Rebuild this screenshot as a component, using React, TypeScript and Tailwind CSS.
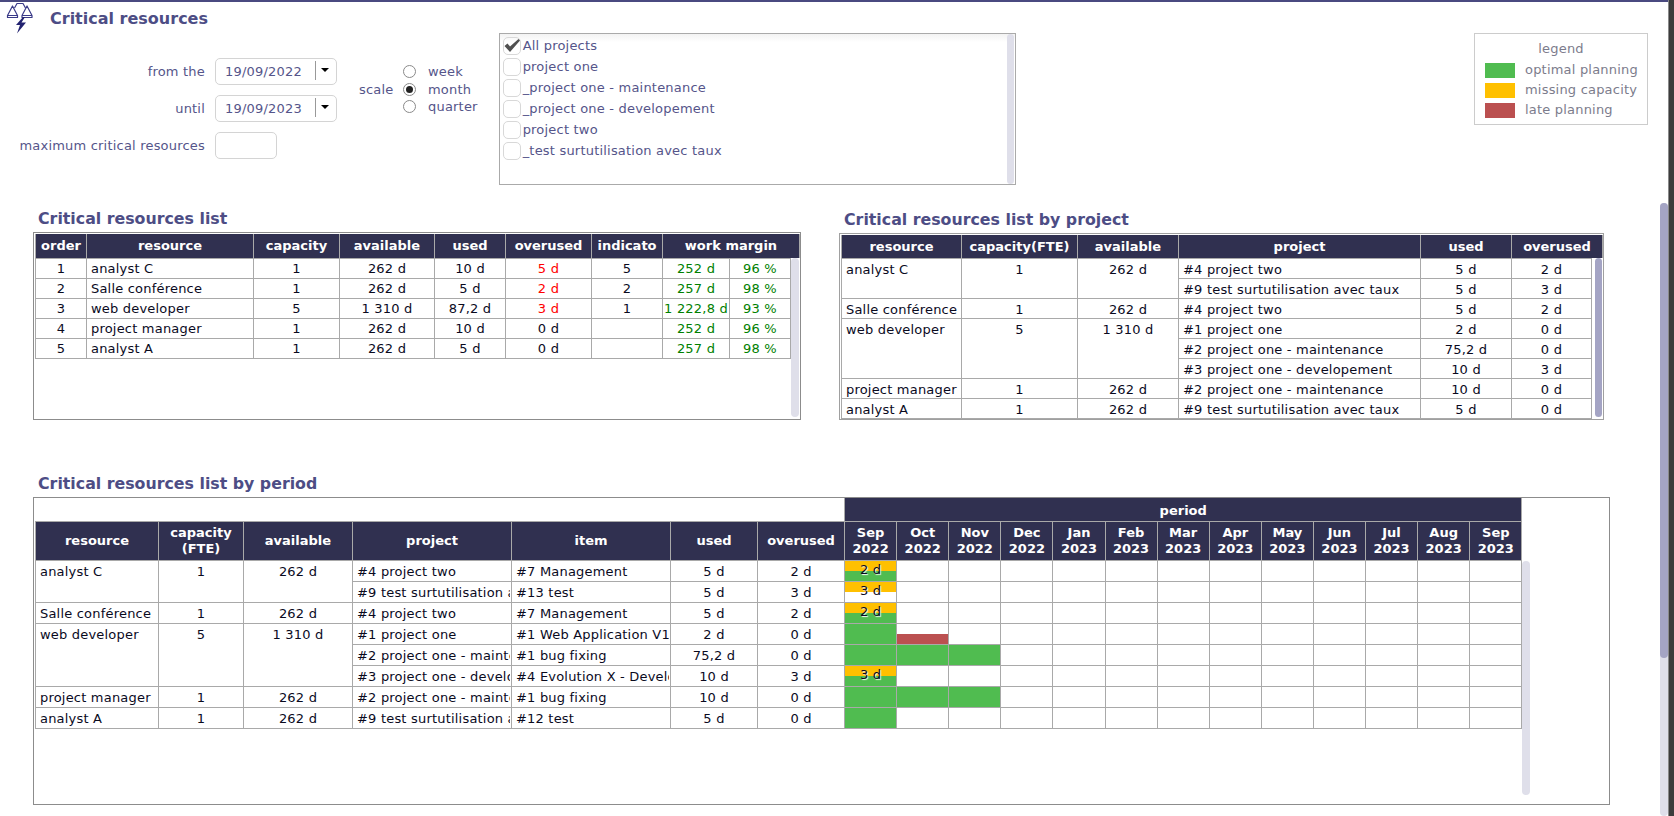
import type { ReactNode } from "react";

const font = "font-['DejaVu_Sans','Liberation_Sans',sans-serif]";

function ScaleIcon() {
  return (
    <svg width="28" height="32" viewBox="0 0 28 32" fill="none" aria-hidden>
      <path d="M8.5 6 L11 1.5 H17 L19.5 6" stroke="#3a3a88" strokeWidth="1.2" />
      <path d="M6.5 4 L1.5 13.5 V15.5 H11.5 V13.5 Z M1.5 13.5 H11.5" stroke="#3a3a88" strokeWidth="1.2" strokeLinejoin="round" />
      <path d="M21 4 L16 13.5 V15.5 H26 V13.5 Z M16 13.5 H26" stroke="#3a3a88" strokeWidth="1.2" strokeLinejoin="round" />
      <path d="M17 15 L10 23 H14 L11 31.5 L20 20.5 H15.5 L19 15 Z" fill="#232370" />
    </svg>
  );
}

function Field({ label, value, wide = true }: { label: string; value?: string; wide?: boolean }) {
  return (
    <div className="flex items-center h-[27px]">
      <span className="w-[205px] text-right text-[13px] text-[#55558a] whitespace-nowrap">{label}</span>
      <div
        className={`ml-[10px] h-[27px] flex items-center rounded-[5px] border border-[#d4d4d4] text-[13px] text-[#55558a] ${
          wide ? "w-[122px]" : "w-[62px]"
        }`}
      >
        {value && (
          <>
            <span className="pl-[9px] w-[99px]">{value}</span>
            <span className="h-[19px] mb-[2px] border-l border-[#999]" />
            <span className="ml-[5px] mb-[3px] w-0 h-0 border-x-[4px] border-x-transparent border-t-[4px] border-t-black" />
          </>
        )}
      </div>
    </div>
  );
}

function Radio({ label, checked }: { label: string; checked?: boolean }) {
  return (
    <div className="flex items-center h-[17.5px]">
      <span className="w-[13px] h-[13px] rounded-full border border-[#8a8a8a] flex items-center justify-center">
        {checked && <span className="w-[7px] h-[7px] rounded-full bg-[#222]" />}
      </span>
      <span className="ml-[12px] text-[13px] text-[#55558a]">{label}</span>
    </div>
  );
}

function ProjectRow({ label, checked }: { label: string; checked?: boolean }) {
  return (
    <div className="flex items-center h-[21px]">
      <span className="w-[18px] h-[18px] rounded-[5px] border border-[#d8d8d8] flex items-center justify-center shrink-0">
        {checked && (
          <svg width="18" height="15" viewBox="0 0 18 15" className="shrink-0" aria-hidden>
            <path d="M1.5 8 L4.5 5.5 L7 8.5 L15.5 1 L17 2.5 L7 14 Z" fill="#505050" />
          </svg>
        )}
      </span>
      <span className="ml-[2px] text-[13px] text-[#55558a] whitespace-nowrap">{label}</span>
    </div>
  );
}

function Legend() {
  const items = [
    { c: "bg-[#50bc50]", t: "optimal planning" },
    { c: "bg-[#ffc000]", t: "missing capacity" },
    { c: "bg-[#bb5050]", t: "late planning" },
  ];
  return (
    <div className="w-[174px] h-[92px] border border-[#cccccc] text-[13px] text-[#7c7c8c]">
      <div className="text-center h-[26px] pt-[7px] leading-[16px]">legend</div>
      {items.map((i) => (
        <div key={i.t} className="flex items-center h-[20px] pl-[10px]">
          <span className={`w-[30px] h-[15px] ${i.c}`} />
          <span className="ml-[10px] whitespace-nowrap">{i.t}</span>
        </div>
      ))}
    </div>
  );
}

const th =
  "bg-[#303050] text-white font-bold text-[13px] tracking-normal border-x border-[#a9a9a9] px-0 text-center overflow-hidden whitespace-nowrap leading-[16px]";
const cell = "border border-[#a9a9a9] text-[13px] text-[#0a0a1e] overflow-hidden whitespace-nowrap p-0 align-top";
const td1 = `${cell} leading-[18px] pt-[1px]`;
const td2 = `${cell} leading-[17px] pt-[2px]`;
const td3 = `${cell} leading-[18px] pt-[2px]`;
const c = "text-center";
const l = "text-left pl-[4px]";

function Cols({ widths }: { widths: number[] }) {
  return (
    <colgroup>
      {widths.map((w, i) => (
        <col key={i} style={{ width: w }} />
      ))}
    </colgroup>
  );
}

function Title({ children, className = "" }: { children: ReactNode; className?: string }) {
  return <h2 className={`text-[15.8px] tracking-normal font-bold text-[#4d4d85] leading-[18px] ${className}`}>{children}</h2>;
}

function ScrollThumb({ className }: { className: string }) {
  return <div className={`absolute rounded-[4px] ${className}`} />;
}

const list1 = [
  ["1", "analyst C", "1", "262 d", "10 d", "5 d", "5", "252 d", "96 %", true],
  ["2", "Salle conférence", "1", "262 d", "5 d", "2 d", "2", "257 d", "98 %", true],
  ["3", "web developer", "5", "1 310 d", "87,2 d", "3 d", "1", "1 222,8 d", "93 %", true],
  ["4", "project manager", "1", "262 d", "10 d", "0 d", "", "252 d", "96 %", false],
  ["5", "analyst A", "1", "262 d", "5 d", "0 d", "", "257 d", "98 %", false],
] as const;

function ResourcesList() {
  const head = [51, 167, 86, 95, 71, 86, 71, 137];
  const widths = [51, 167, 86, 95, 71, 86, 71, 67, 61];
  return (
    <div className="relative w-[768px] h-[188px] border border-[#8c8c8c] overflow-hidden pl-[1px] pt-[1px]">
      <table className="table-fixed border-collapse w-[764px]">
        <Cols widths={head} />
        <thead>
          <tr className="h-[24px]">
            {["order", "resource", "capacity", "available", "used", "overused", "indicato", "work margin"].map((h) => (
              <th key={h} className={th}>
                {h}
              </th>
            ))}
          </tr>
        </thead>
      </table>
      <table className="table-fixed border-collapse w-[755px]">
        <Cols widths={widths} />
        <tbody>
          {list1.map((r) => (
            <tr key={r[0]} className="h-[20px]">
              <td className={`${td1} ${c}`}>{r[0]}</td>
              <td className={`${td1} ${l}`}>{r[1]}</td>
              <td className={`${td1} ${c}`}>{r[2]}</td>
              <td className={`${td1} ${c}`}>{r[3]}</td>
              <td className={`${td1} ${c}`}>{r[4]}</td>
              <td className={`${td1} ${c} ${r[9] ? "text-[#ff0000]" : ""}`}>{r[5]}</td>
              <td className={`${td1} ${c}`}>{r[6]}</td>
              <td className={`${td1} ${c} text-[#008000]`}>{r[7]}</td>
              <td className={`${td1} ${c} text-[#008000]`}>{r[8]}</td>
            </tr>
          ))}
        </tbody>
      </table>
      <ScrollThumb className="left-[757px] top-[25px] w-[8px] h-[159px] bg-[#dfdfea]" />
    </div>
  );
}

const list2 = [
  { res: "analyst C", cap: "1", av: "262 d", rows: [["#4 project two", "5 d", "2 d"], ["#9 test surtutilisation avec taux", "5 d", "3 d"]] },
  { res: "Salle conférence", cap: "1", av: "262 d", rows: [["#4 project two", "5 d", "2 d"]] },
  {
    res: "web developer",
    cap: "5",
    av: "1 310 d",
    rows: [["#1 project one", "2 d", "0 d"], ["#2 project one - maintenance", "75,2 d", "0 d"], ["#3 project one - developement", "10 d", "3 d"]],
  },
  { res: "project manager", cap: "1", av: "262 d", rows: [["#2 project one - maintenance", "10 d", "0 d"]] },
  { res: "analyst A", cap: "1", av: "262 d", rows: [["#9 test surtutilisation avec taux", "5 d", "0 d"]] },
];

function ByProject() {
  const head = [120, 116, 101, 242, 91, 91];
  const widths = [120, 116, 101, 242, 91, 80];
  return (
    <div className="relative w-[765px] h-[187px] border border-[#a0a0a0] overflow-hidden pl-[1px] pt-[1px]">
      <table className="table-fixed border-collapse w-[761px]">
        <Cols widths={head} />
        <thead>
          <tr className="h-[23px]">
            {["resource", "capacity(FTE)", "available", "project", "used", "overused"].map((h) => (
              <th key={h} className={th}>
                {h}
              </th>
            ))}
          </tr>
        </thead>
      </table>
      <table className="table-fixed border-collapse w-[750px]">
        <Cols widths={widths} />
        <tbody>
          {list2.flatMap((g) =>
            g.rows.map((r, i) => (
              <tr key={g.res + i} className="h-[20px]">
                {i === 0 && (
                  <>
                    <td rowSpan={g.rows.length} className={`${td2} ${l}`}>
                      {g.res}
                    </td>
                    <td rowSpan={g.rows.length} className={`${td2} ${c}`}>
                      {g.cap}
                    </td>
                    <td rowSpan={g.rows.length} className={`${td2} ${c}`}>
                      {g.av}
                    </td>
                  </>
                )}
                <td className={`${td2} ${l}`}>{r[0]}</td>
                <td className={`${td2} ${c}`}>{r[1]}</td>
                <td className={`${td2} ${c}`}>{r[2]}</td>
              </tr>
            ))
          )}
        </tbody>
      </table>
      <ScrollThumb className="left-[755px] top-[24px] w-[7px] h-[159px] bg-[#a4a4c4]" />
    </div>
  );
}

const months = [
  ["Sep", "2022"], ["Oct", "2022"], ["Nov", "2022"], ["Dec", "2022"], ["Jan", "2023"], ["Feb", "2023"], ["Mar", "2023"],
  ["Apr", "2023"], ["May", "2023"], ["Jun", "2023"], ["Jul", "2023"], ["Aug", "2023"], ["Sep", "2023"],
];

type Bar = { label?: string; top?: string; bottom?: string };
const G = "bg-[#50bc50]";
const Y = "bg-[#ffc000]";
const R = "bg-[#bb5050]";

const list3: { res: string; cap: string; av: string; rows: { p: string; it: string; u: string; o: string; bars: Bar[] }[] }[] = [
  {
    res: "analyst C",
    cap: "1",
    av: "262 d",
    rows: [
      { p: "#4 project two", it: "#7 Management", u: "5 d", o: "2 d", bars: [{ label: "2 d", top: Y, bottom: G }] },
      { p: "#9 test surtutilisation avec taux", it: "#13 test", u: "5 d", o: "3 d", bars: [{ label: "3 d", top: Y }] },
    ],
  },
  {
    res: "Salle conférence",
    cap: "1",
    av: "262 d",
    rows: [{ p: "#4 project two", it: "#7 Management", u: "5 d", o: "2 d", bars: [{ label: "2 d", top: Y, bottom: G }] }],
  },
  {
    res: "web developer",
    cap: "5",
    av: "1 310 d",
    rows: [
      { p: "#1 project one", it: "#1 Web Application V1", u: "2 d", o: "0 d", bars: [{ top: G, bottom: G }, { bottom: R }] },
      { p: "#2 project one - maintenance", it: "#1 bug fixing", u: "75,2 d", o: "0 d", bars: [{ top: G, bottom: G }, { top: G, bottom: G }, { top: G, bottom: G }] },
      { p: "#3 project one - developement", it: "#4 Evolution X - Development", u: "10 d", o: "3 d", bars: [{ label: "3 d", top: Y, bottom: G }] },
    ],
  },
  {
    res: "project manager",
    cap: "1",
    av: "262 d",
    rows: [{ p: "#2 project one - maintenance", it: "#1 bug fixing", u: "10 d", o: "0 d", bars: [{ top: G, bottom: G }, { top: G, bottom: G }, { top: G, bottom: G }] }],
  },
  {
    res: "analyst A",
    cap: "1",
    av: "262 d",
    rows: [{ p: "#9 test surtutilisation avec taux", it: "#12 test", u: "5 d", o: "0 d", bars: [{ top: G, bottom: G }] }],
  },
];

function BarCell({ bar }: { bar?: Bar }) {
  return (
    <td className="border border-[#a9a9a9] p-0 h-[21px]">
      <div className="relative h-[20px] flex flex-col">
        <div className={`h-[10px] ${bar?.top ?? ""}`} />
        <div className={`h-[10px] ${bar?.bottom ?? ""}`} />
        {bar?.label && (
          <span className="absolute inset-0 text-center text-[13px] leading-[18px] text-[#0a0a1e] [text-shadow:1px_1px_1px_#fff]">
            {bar.label}
          </span>
        )}
      </div>
    </td>
  );
}

function Clipped({ children }: { children: ReactNode }) {
  return <div className="overflow-hidden mr-[1px]">{children}</div>;
}

function ByPeriod() {
  const widths = [123, 85, 109, 159, 159, 87, 87, ...months.map(() => 52.1)];
  return (
    <div className="relative w-[1577px] h-[308px] border border-[#8c8c8c] overflow-hidden pl-[1px]">
      <table className="table-fixed border-collapse w-[1486px]">
        <Cols widths={widths} />
        <thead>
          <tr className="h-[23px]">
            <th colSpan={7} className="bg-white" />
            <th colSpan={13} className={`${th} border-t-0 pt-[3px]`}>
              period
            </th>
          </tr>
          <tr className="h-[39px]">
            {["resource", "capacity (FTE)", "available", "project", "item", "used", "overused"].map((h) => (
              <th key={h} className={`${th} border-t ${h === "capacity (FTE)" ? "whitespace-normal" : ""}`}>
                {h === "capacity (FTE)" ? (
                  <>
                    capacity
                    <br />
                    (FTE)
                  </>
                ) : (
                  h
                )}
              </th>
            ))}
            {months.map((m, i) => (
              <th key={i} className={`${th} border-t`}>
                {m[0]}
                <br />
                {m[1]}
              </th>
            ))}
          </tr>
        </thead>
        <tbody>
          {list3.flatMap((g) =>
            g.rows.map((r, i) => (
              <tr key={g.res + i} className="h-[21px]">
                {i === 0 && (
                  <>
                    <td rowSpan={g.rows.length} className={`${td3} ${l}`}>
                      {g.res}
                    </td>
                    <td rowSpan={g.rows.length} className={`${td3} ${c}`}>
                      {g.cap}
                    </td>
                    <td rowSpan={g.rows.length} className={`${td3} ${c}`}>
                      {g.av}
                    </td>
                  </>
                )}
                <td className={`${td3} ${l}`}>
                  <Clipped>{r.p}</Clipped>
                </td>
                <td className={`${td3} ${l}`}>
                  <Clipped>{r.it}</Clipped>
                </td>
                <td className={`${td3} ${c}`}>{r.u}</td>
                <td className={`${td3} ${c}`}>{r.o}</td>
                {months.map((_, m) => (
                  <BarCell key={m} bar={r.bars[m]} />
                ))}
              </tr>
            ))
          )}
        </tbody>
      </table>
      <ScrollThumb className="left-[1488px] top-[63px] w-[8px] h-[234px] bg-[#dfdfea]" />
    </div>
  );
}

export default function App() {
  return (
    <div className={`${font} tracking-[0.2px] relative w-[1674px] h-[816px] overflow-hidden bg-white flex`}>
      <main className="relative w-[1668px] h-[816px] border-t-2 border-[#4a4a80]">
        <header className="flex items-start pl-[6px] h-[31px]">
          <ScaleIcon />
          <h1 className="ml-[16px] mt-[8px] text-[16px] tracking-normal font-bold leading-[18px] text-[#4d4d85]">Critical resources</h1>
        </header>

        <section className="flex items-start">
          <div className="flex flex-col gap-[10px] pt-[25px]">
            <Field label="from the" value="19/09/2022" />
            <Field label="until" value="19/09/2023" />
            <Field label="maximum critical resources" wide={false} />
          </div>
          <div className="flex items-center ml-[22px] mt-[30px]">
            <span className="text-[13px] text-[#55558a] w-[44px]">scale</span>
            <div className="flex flex-col">
              <Radio label="week" />
              <Radio label="month" checked />
              <Radio label="quarter" />
            </div>
          </div>
          <div className="relative ml-[21px] w-[517px] h-[152px] border border-[#aaaaaa] pl-[3px] pt-[1px] bg-[linear-gradient(#f3f3f3,#ffffff_8px)]">
            {[
              "All projects",
              "project one",
              "_project one - maintenance",
              "_project one - developement",
              "project two",
              "_test surtutilisation avec taux",
            ].map((p, i) => (
              <ProjectRow key={p} label={p} checked={i === 0} />
            ))}
            <ScrollThumb className="right-[1px] top-0 w-[7px] h-[150px] bg-[#dfdfea]" />
          </div>
          <div className="ml-auto mr-[20px]">
            <Legend />
          </div>
        </section>

        <section className="flex items-start mt-[24px] pl-[33px]">
          <div>
            <Title className="pl-[5px] h-[23px] pt-[1px]">Critical resources list</Title>
            <ResourcesList />
          </div>
          <div className="ml-[38px]">
            <Title className="pl-[5px] h-[24px] pt-[2px]">Critical resources list by project</Title>
            <ByProject />
          </div>
        </section>

        <section className="mt-[54px] pl-[33px]">
          <Title className="pl-[5px] h-[23px] pt-[1px]">Critical resources list by period</Title>
          <ByPeriod />
        </section>

        <div className="absolute left-[1660px] top-[201px] w-[8px] h-[613px] bg-[#dfdfea] rounded-[4px]" />
        <div className="absolute left-[1660px] top-[201px] w-[8px] h-[455px] bg-[#a4a4c4] rounded-[4px]" />
      </main>
      <div className="w-[6px] h-[816px] bg-[#3c3c3c] border-l border-[#8a8a8a]" />
    </div>
  );
}
